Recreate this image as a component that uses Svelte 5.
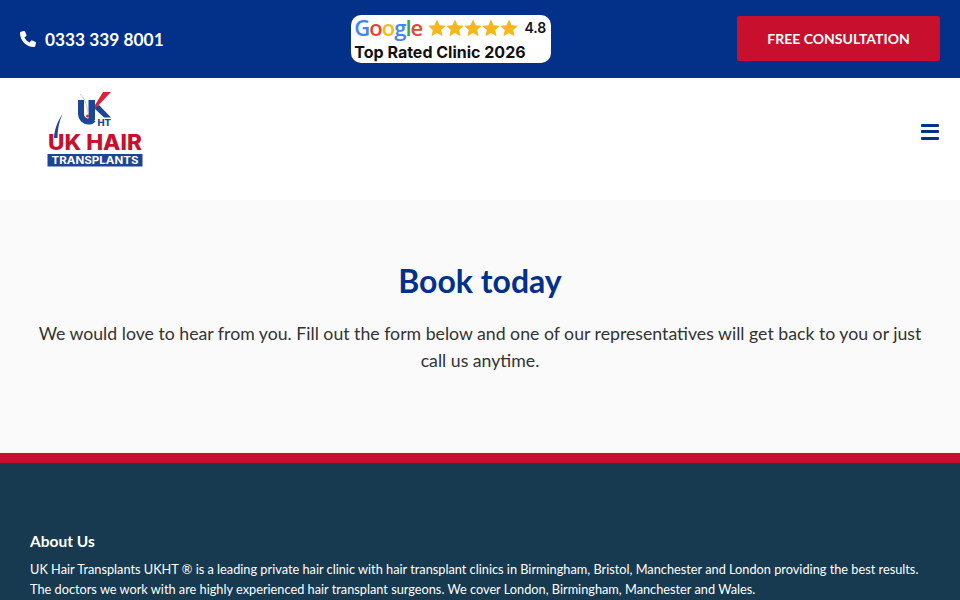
<script>
	const stars = [0, 1, 2, 3, 4]
</script>

<header class="top">
	<a class="phone" href="#tel">
		<svg viewBox="0 0 512 512" width="16" height="16" aria-hidden="true">
			<path fill="#fff" d="M164.900 24.600c-7.700-18.600-28-28.500-47.400-23.200l-88 24C12.100 30.200 0 46 0 64C0 311.400 200.600 512 448 512c18 0 33.800-12.100 38.600-29.500l24-88c5.300-19.400-4.600-39.700-23.200-47.400l-96-40c-16.300-6.800-35.200-2.100-46.300 11.600L304.700 368C234.300 334.700 177.300 277.700 144 207.300L193.300 167c13.700-11.200 18.400-30 11.600-46.300l-40-96z"/>
		</svg>
		0333 339 8001
	</a>
	<div class="badge">
		<div class="badge-row">
			<span class="google"><i class="b">G</i><i class="r">o</i><i class="y">o</i><i class="b">g</i><i class="g">l</i><i class="r">e</i></span>
			<span class="stars">
				{#each stars as s}
					<svg viewBox="0 0 24 24" width="18" height="18" aria-hidden="true">
						<path fill="#f6b71c" d="M12 .5l3.500 7.700 8.300.9-6.200 5.600 1.800 8.200-7.400-4.200-7.400 4.200 1.800-8.200L.200 9.100l8.300-.9z"/>
					</svg>
				{/each}
			</span>
			<span class="score">4.8</span>
		</div>
		<div class="rated">Top Rated Clinic 2026</div>
	</div>
	<a class="cta" href="#consult">FREE CONSULTATION</a>
</header>

<nav class="nav">
	<a class="logo" href="#home" aria-label="UK Hair Transplants">
		<svg viewBox="0 0 96 76" width="96" height="76">
			<!-- mark -->
			<path fill="none" stroke="#1c4595" stroke-width="6" d="M34 9v14a7.500 7.500 0 0 0 7.500 7.500c2 0 3.500-.5 4.500-2"/>
			<path fill="#1c4595" d="M41.500 9h6.500v20h-6.500z"/>
			<path fill="#1c4595" d="M47 17l5-3 12 12.500h-7z"/>
			<path fill="#d8243a" d="M48 18v-4L56 1h8z"/>
			<path fill="none" stroke="#c3cadc" stroke-width="1" d="M33 3c4 4 7 10 8 19"/>
			<circle cx="40.500" cy="25" r="1.500" fill="#d8243a"/>
			<text class="ht" x="50.500" y="34.500">HT</text>
			<!-- hair strand -->
			<path fill="#1c4595" d="M15.500 23c-4 6-8 14-8.500 24l3.500 0c0-9 1.500-16 5-24z"/>
			<text class="uk" x="1" y="59" textLength="94" lengthAdjust="spacingAndGlyphs">UK HAIR</text>
			<rect x="0.500" y="63" width="95" height="12.500" fill="#1c4595"/>
			<text class="tr" x="48" y="73" text-anchor="middle" textLength="87" lengthAdjust="spacingAndGlyphs">TRANSPLANTS</text>
		</svg>
	</a>
	<button class="burger" aria-label="Menu"><span></span><span></span><span></span></button>
</nav>

<main class="book">
	<h1>Book today</h1>
	<p>We would love to hear from you. Fill out the form below and one of our representatives will get back to you or just call us anytime.</p>
</main>

<footer class="footer">
	<h2>About Us</h2>
	<p>UK Hair Transplants UKHT ® is a leading private hair clinic with hair transplant clinics in Birmingham, Bristol, Manchester and London providing the best results. The doctors we work with are highly experienced hair transplant surgeons. We cover London, Birmingham, Manchester and Wales.</p>
</footer>

<style>
	:global(body) {
		margin: 0;
		font-family: "Lato", "Open Sans", sans-serif;
		overflow: hidden;
	}

	.top {
		height: 78px;
		background: #03318a;
		display: flex;
		align-items: center;
		justify-content: space-between;
		padding: 0 20px;
		box-sizing: border-box;
	}

	.phone {
		display: flex;
		align-items: center;
		gap: 9px;
		color: #fff;
		font-size: 17.300px;
		font-weight: 700;
		text-decoration: none;
	}

	.badge {
		width: 200px;
		height: 48px;
		margin-left: 2px;
		background: #fff;
		border-radius: 10px;
		box-sizing: border-box;
		padding: 0 5px 0 3px;
	}

	.badge-row {
		display: flex;
		align-items: center;
		height: 25px;
	}

	.google {
		font-family: "Open Sans", sans-serif;
		font-size: 22px;
		font-weight: 600;
		line-height: 25px;
		letter-spacing: -1px;
		width: 74px;
		flex: none;
	}

	.google i {
		font-style: normal;
	}

	.b { color: #4285f4; }
	.r { color: #ea4335; }
	.y { color: #fbbc05; }
	.g { color: #34a853; }

	.stars {
		display: flex;
		flex: none;
	}

	.score {
		margin-left: auto;
		font-family: "Inter", sans-serif;
		font-size: 14px;
		font-weight: 600;
		color: #111;
	}

	.rated {
		font-family: "Inter", sans-serif;
		font-size: 16px;
		font-weight: 700;
		color: #111;
		line-height: 24px;
		white-space: nowrap;
	}

	.cta {
		width: 203px;
		height: 45px;
		margin-top: -1px;
		background: #c8102e;
		color: #fff;
		font-size: 14px;
		font-weight: 700;
		display: flex;
		align-items: center;
		justify-content: center;
		text-decoration: none;
		border-radius: 2px;
	}

	.nav {
		height: 122px;
		background: #fff;
		display: flex;
		align-items: center;
		justify-content: space-between;
		padding: 0 21px 0 47px;
		box-sizing: border-box;
	}

	.logo {
		display: block;
		height: 76px;
		margin-bottom: 20px;
	}

	.logo svg {
		display: block;
		overflow: visible;
	}

	.uk {
		font-family: "Inter", sans-serif;
		font-weight: 800;
		font-size: 21px;
		fill: #c8102e;
	}

	.tr {
		font-family: "Inter", sans-serif;
		font-weight: 700;
		font-size: 10.500px;
		fill: #fff;
	}

	.ht {
		font-family: "Inter", sans-serif;
		font-weight: 800;
		font-size: 9.500px;
		fill: #1c4595;
	}

	.burger {
		width: 18px;
		height: 16px;
		padding: 0;
		border: 0;
		background: none;
		display: flex;
		flex-direction: column;
		justify-content: space-between;
		margin-top: -15px;
	}

	.burger span {
		display: block;
		height: 3px;
		background: #03318a;
		border-radius: 1px;
	}

	.book {
		height: 253px;
		background: #fafafa;
		box-sizing: border-box;
		padding: 62px 30px 0;
		text-align: center;
	}

	.book h1 {
		margin: 0 0 20px;
		color: #03318a;
		font-size: 32px;
		line-height: 38px;
		font-weight: 700;
	}

	.book p {
		margin: 0;
		color: #333;
		font-size: 17.700px;
		line-height: 27px;
	}

	.footer {
		height: 137px;
		background: #173a50;
		border-top: 10px solid #c8102e;
		color: #fff;
		padding: 68px 30px 0;
		overflow: hidden;
	}

	.footer h2 {
		margin: 0 0 8px;
		font-size: 15.500px;
		line-height: 20px;
		font-weight: 700;
	}

	.footer p {
		margin: 0;
		font-size: 12.750px;
		line-height: 20px;
	}
</style>
